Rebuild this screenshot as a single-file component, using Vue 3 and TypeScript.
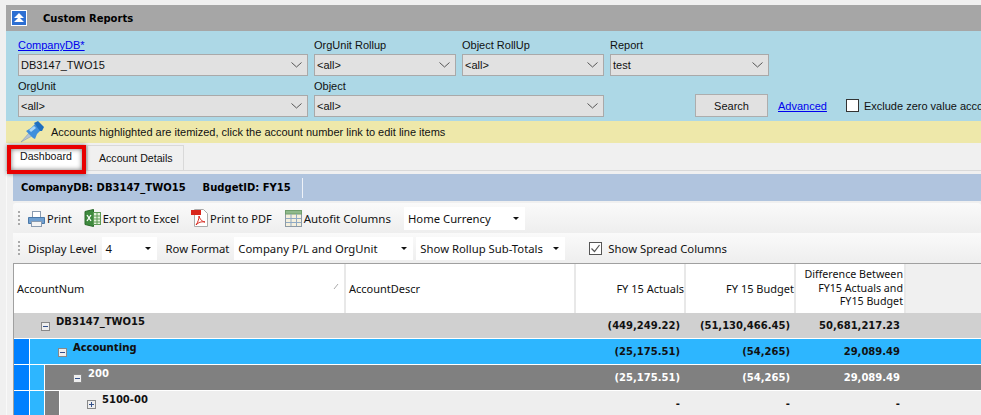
<script setup lang="ts">
interface Row { name: string; level: string; icon: string; a: string; b: string; c: string }
const rows: Row[] = [
  { name: 'DB3147_TWO15', level: 'r0', icon: 'minus', a: '(449,249.22)', b: '(51,130,466.45)', c: '50,681,217.23' },
  { name: 'Accounting', level: 'r1', icon: 'minus', a: '(25,175.51)', b: '(54,265)', c: '29,089.49' },
  { name: '200', level: 'r2', icon: 'minus', a: '(25,175.51)', b: '(54,265)', c: '29,089.49' },
  { name: '5100-00', level: 'r3', icon: 'plus', a: '-', b: '-', c: '-' },
]
</script>

<template>
  <div class="page">
    <header class="titlebar">
      <span class="upbox">
        <svg width="14" height="14" viewBox="0 0 14 14"><path d="M7 2 12 7H2Z M7 6 12 11H2Z" fill="#fff" /></svg>
      </span>
      <b>Custom Reports</b>
    </header>

    <section class="filters">
      <div class="frow">
        <label class="field w290"><a class="lnk">CompanyDB*</a>
          <span class="sel"><span>DB3147_TWO15</span><svg class="chev" width="11" height="6" viewBox="0 0 11 6"><path d="M.5.5 5.5 5 10.500.5" fill="none" stroke="#555" /></svg></span>
        </label>
        <label class="field w142">OrgUnit Rollup
          <span class="sel"><span>&lt;all&gt;</span><svg class="chev" width="11" height="6" viewBox="0 0 11 6"><path d="M.5.5 5.5 5 10.500.5" fill="none" stroke="#555" /></svg></span>
        </label>
        <label class="field w142">Object RollUp
          <span class="sel"><span>&lt;all&gt;</span><svg class="chev" width="11" height="6" viewBox="0 0 11 6"><path d="M.5.5 5.5 5 10.500.5" fill="none" stroke="#555" /></svg></span>
        </label>
        <label class="field w159">Report
          <span class="sel"><span>test</span><svg class="chev" width="11" height="6" viewBox="0 0 11 6"><path d="M.5.5 5.5 5 10.500.5" fill="none" stroke="#555" /></svg></span>
        </label>
      </div>
      <div class="frow second">
        <label class="field w290">OrgUnit
          <span class="sel"><span>&lt;all&gt;</span><svg class="chev" width="11" height="6" viewBox="0 0 11 6"><path d="M.5.5 5.5 5 10.500.5" fill="none" stroke="#555" /></svg></span>
        </label>
        <label class="field w290">Object
          <span class="sel"><span>&lt;all&gt;</span><svg class="chev" width="11" height="6" viewBox="0 0 11 6"><path d="M.5.5 5.5 5 10.500.5" fill="none" stroke="#555" /></svg></span>
        </label>
        <div class="actions">
          <button class="search">Search</button>
          <a class="lnk adv">Advanced</a>
          <span class="cb"></span>
          <span class="excl">Exclude zero value accounts</span>
        </div>
      </div>
    </section>

    <div class="notice">
      <svg class="pin" width="25" height="22" viewBox="0 0 25 22">
        <path d="M1 21 9 12l3 3Z" fill="#b4c4d4" stroke="#7f93a8" stroke-width=".5" />
        <path d="M6 10 11 7 15 3 21 9 17 13 15 18 13 17Z" fill="#3f8fdc" />
        <path d="M14 2 18 0 24 6 22 10 20 10Z" fill="#1e6fc0" />
        <path d="M9 9 14 5 16 7 11 11Z" fill="#a9d6f7" />
      </svg>
      <span>Accounts highlighted are itemized, click the account number link to edit line items</span>
    </div>

    <nav class="tabs">
      <span class="tab active">Dashboard</span>
      <span class="tab">Account Details</span>
      <span class="redbox"></span>
    </nav>

    <div class="content">
      <div class="summary">
        <b>CompanyDB: DB3147_TWO15</b><b class="bud">BudgetID: FY15</b><i class="sep"></i>
      </div>

      <div class="tool t1">
        <i class="grip"></i>
        <span class="cmd">
          <svg width="17" height="17" viewBox="0 0 17 17"><rect x="4.500" y="1.500" width="8" height="6" fill="#fff" stroke="#8a9bb0" /><path d="M.5 7.500h16v6H.5Z" fill="#6f9fd0" stroke="#4a78a8" /><rect x="3.500" y="11.500" width="10" height="5" fill="#f4f4f4" stroke="#8a9bb0" /></svg>Print
        </span>
        <span class="cmd">
          <svg width="17" height="18" viewBox="0 0 17 18"><path d="M1 2.500 9.500.5v17l-8.500-2Z" fill="#3e8a3e" stroke="#2b6b2b" /><rect x="9.500" y="3.500" width="7" height="12" fill="#e4f2dc" stroke="#5d9a55" /><path d="M10 7h6M10 10h6M10 13h6M13 4v11" stroke="#5d9a55" /><path d="M3 6 7 12M7 6 3 12" stroke="#fff" stroke-width="1.300" /></svg>Export to Excel
        </span>
        <span class="cmd">
          <svg width="17" height="18" viewBox="0 0 17 18"><path d="M3.500.5h9l4 4v13h-13Z" fill="#fff" stroke="#aaa" /><rect x="0" y="1" width="10" height="5" fill="#d8261c" /><path d="M5 16c2-3 3-6 3-9 1 3 2 5 6 6-4-.5-6 0-9 3Z" fill="none" stroke="#d8261c" /></svg>Print to PDF
        </span>
        <span class="cmd auto">
          <svg width="17" height="17" viewBox="0 0 17 17"><rect x=".5" y=".5" width="16" height="16" fill="#f4efdc" stroke="#8d9aa5" /><rect x=".5" y=".5" width="16" height="3.500" fill="#8fb98c" stroke="#6f9d6c" /><path d="M6 4v12M11.500 4v12M1 8.500h15M1 12.500h15" stroke="#8fa9c4" /></svg>Autofit Columns
        </span>
        <span class="drop home"><span>Home Currency</span><i class="tri"></i></span>
      </div>

      <div class="tool t2">
        <i class="grip"></i>
        <span class="tlabel">Display Level</span>
        <span class="drop level"><span>4</span><i class="tri"></i></span>
        <span class="tlabel rf">Row Format</span>
        <span class="drop fmt"><span>Company P/L and OrgUnit</span><i class="tri"></i></span>
        <span class="drop roll"><span>Show Rollup Sub-Totals</span><i class="tri"></i></span>
        <span class="cb2">
          <svg width="13" height="13" viewBox="0 0 13 13"><rect x=".5" y=".5" width="12" height="12" fill="#fff" stroke="#555" /><path d="M2.500 6.500 5.500 9.500 10.500 3" fill="none" stroke="#555" stroke-width="1.200" /></svg>
        </span>
        <span class="tlabel">Show Spread Columns</span>
      </div>

      <div class="grid">
        <div class="ghead">
          <div class="gc acc">AccountNum<svg class="sort" width="6" height="7" viewBox="0 0 6 7"><path d="M1 6 5 1" stroke="#aaa" /></svg></div>
          <div class="gc desc">AccountDescr</div>
          <div class="gc num">FY 15 Actuals</div>
          <div class="gc num">FY 15 Budget</div>
          <div class="gc num diff">Difference Between FY15 Actuals and FY15 Budget</div>
          <div class="gfill"></div>
        </div>
        <div v-for="r in rows" :key="r.name" class="grow" :class="r.level">
          <i class="strip s1"></i><i class="strip s2"></i><i class="strip s3"></i>
          <div class="gname">
            <span class="tree">
              <svg width="9" height="9" viewBox="0 0 9 9"><rect x=".5" y=".5" width="8" height="8" fill="#eee" stroke="#888" /><path d="M2 4.500h5" stroke="#33508a" /><path v-if="r.icon === 'plus'" d="M4.500 2v5" stroke="#33508a" /></svg>
            </span>
            <b>{{ r.name }}</b>
          </div>
          <b class="val">{{ r.a }}</b><b class="val">{{ r.b }}</b><b class="val">{{ r.c }}</b>
          <div class="gfill2"></div>
        </div>
      </div>
    </div>
  </div>
</template>

<style>
html, body { margin: 0; background: #f0f0f0; overflow: hidden; }
</style>

<style scoped>
.page { width: 975px; height: 410px; padding: 5px 0 0 6px; overflow: hidden; font-family: "Liberation Sans", sans-serif; font-size: 11px; color: #111; background: #f0f0f0; }
b { font-family: "DejaVu Sans", sans-serif; font-size: 10px; }
.titlebar { display: flex; align-items: center; height: 26px; background: #a6a6a6; }
.titlebar b { margin-left: 16px; color: #000; }
.upbox { display: flex; align-items: center; justify-content: center; width: 14px; height: 14px; margin-left: 5px; border: 1px solid #fff; background: #2d6fd2; }
.filters { height: 84px; padding: 6px 0 0 12px; background: #add8e6; }
.frow { display: flex; gap: 6px; white-space: nowrap; }
.second { margin-top: 2px; }
.field { display: flex; flex: none; flex-direction: column; line-height: 16px; }
.w290 { width: 290px; }
.w142 { width: 142px; }
.w159 { width: 159px; }
.lnk { color: #0000ee; text-decoration: underline; }
.sel { display: flex; align-items: center; justify-content: space-between; height: 20px; margin-top: 1px; padding: 0 5px 0 2px; border: 1px solid #a9a9a9; background: #e1e1e1; }
.actions { display: flex; flex: none; align-items: center; margin-left: 85px; align-self: flex-end; height: 23px; }
.search { width: 73px; height: 23px; padding: 0; border: 1px solid #adadad; background: #e1e1e1; font: inherit; color: #111; }
.adv { margin-left: 10px; }
.cb { width: 11px; height: 11px; margin-left: 19px; border: 1px solid #333; background: #fff; }
.excl { margin-left: 5px; }
.notice { display: flex; align-items: center; height: 22px; background: #eee8aa; }
.pin { margin-left: 14px; }
.notice span { margin-left: 6px; }
.tabs { position: relative; display: flex; align-items: flex-end; height: 27px; border-bottom: 1px solid #d9d9d9; font-size: 10.600px; }
.tab { display: flex; align-items: center; box-sizing: border-box; height: 25px; padding: 0 10px 0 11px; border: 1px solid #d9d9d9; border-bottom: 0; }
.tab.active { width: 79px; margin-left: 2px; padding: 4px 0 0 11px; background: #fff; align-items: flex-start; }
.redbox { position: absolute; left: 1px; top: 2px; width: 71px; height: 21px; border: 4px solid #e80000; box-shadow: 0 0 4px rgba(0,0,0,.45), inset 0 0 5px rgba(0,0,0,.55); }
.content { padding: 3px 0 0 6px; border-left: 1px solid #f9f9f9; }
.summary { display: flex; align-items: center; height: 27px; padding-left: 8px; background: #b0c4de; white-space: nowrap; }
.summary b { color: #000; }
.bud { margin-left: 17px; }
.sep { width: 1px; height: 20px; margin-left: 11px; background: #eef2f8; }
.tool { display: flex; align-items: center; white-space: nowrap; font-family: "Noto Sans", sans-serif; font-size: 11.300px; background: linear-gradient(#fafafa, #eeeeee); }
.t1 { height: 30px; margin-top: 2px; border-radius: 3px; }
.t2 { height: 30px; }
.grip { width: 2px; height: 14px; margin: 0 8px 0 5px; background: repeating-linear-gradient(#aaa 0 2px, transparent 2px 4px); }
.cmd { display: flex; align-items: center; gap: 2px; margin-right: 12px; font-size: 11px; }
.auto { margin-left: 1px; margin-right: 13px; font-size: 11.500px; }
.drop { display: flex; align-items: center; justify-content: space-between; box-sizing: border-box; height: 23px; padding: 0 4px; background: #fff; }
.tri { width: 0; height: 0; margin-right: 2px; border: 3px solid transparent; border-top: 3px solid #111; border-bottom: 0; }
.home { width: 121px; }
.level { width: 55px; margin-left: 5px; }
.rf { margin: 0 5px 0 9px; }
.fmt { width: 179px; }
.roll { width: 149px; margin-left: 3px; }
.cb2 { display: flex; margin: 0 6px 0 24px; }
.grid { border-top: 1px solid #a0a0a0; border-left: 1px solid #a0a0a0; }
.ghead { display: flex; height: 49px; font-family: "Noto Sans", sans-serif; }
.gc { display: flex; align-items: center; box-sizing: border-box; padding: 0 0 0 3px; background: #fff; border-right: 2px solid #e8e8e8; }
.acc { position: relative; width: 332px; }
.sort { position: absolute; right: 5px; top: 19px; }
.desc { width: 230px; }
.num { width: 110px; justify-content: flex-end; text-align: right; line-height: 13.500px; }
.diff { padding-right: 1px; font-size: 10.700px; }
.gfill { flex: 1; background: #f0f0f0; }
.grow { display: flex; height: 26px; box-sizing: border-box; border-bottom: 1px solid #fff; }
.strip { display: none; width: 15px; flex: none; }
.gname { flex: 1; display: flex; }
.gname b { padding-top: 3px; }
.r1 .gname b { padding-top: 0; font-family: "Noto Sans", sans-serif; font-size: 11px; font-weight: 800; }
.tree { display: flex; padding: 9px 6px 0 0; }
.val { flex: none; width: 110px; box-sizing: border-box; padding: 7px 5px 0 0; text-align: right; }
.gfill2 { flex: none; width: 76px; }
.r0 { background: #d0d0d0; }
.r0 .gname { padding-left: 27px; }
.r1 { background: #2db6ff; }
.r2 { background: #808080; color: #fff; }
.r3 { background: #eeeeee; height: 25px; border: 0; }
.r1 .s1, .r2 .s1, .r3 .s1 { display: block; background: #0080ff; border-right: 1px solid #fff; }
.r2 .s2, .r3 .s2 { display: block; background: #2db6ff; border-right: 1px solid #fff; width: 14px; }
.r3 .s3 { display: block; background: #808080; border-right: 1px solid #fff; width: 14px; }
.r1 .gname { padding-left: 28px; }
.r2 .gname { padding-left: 28px; }
.r3 .gname { padding-left: 27px; }
</style>
